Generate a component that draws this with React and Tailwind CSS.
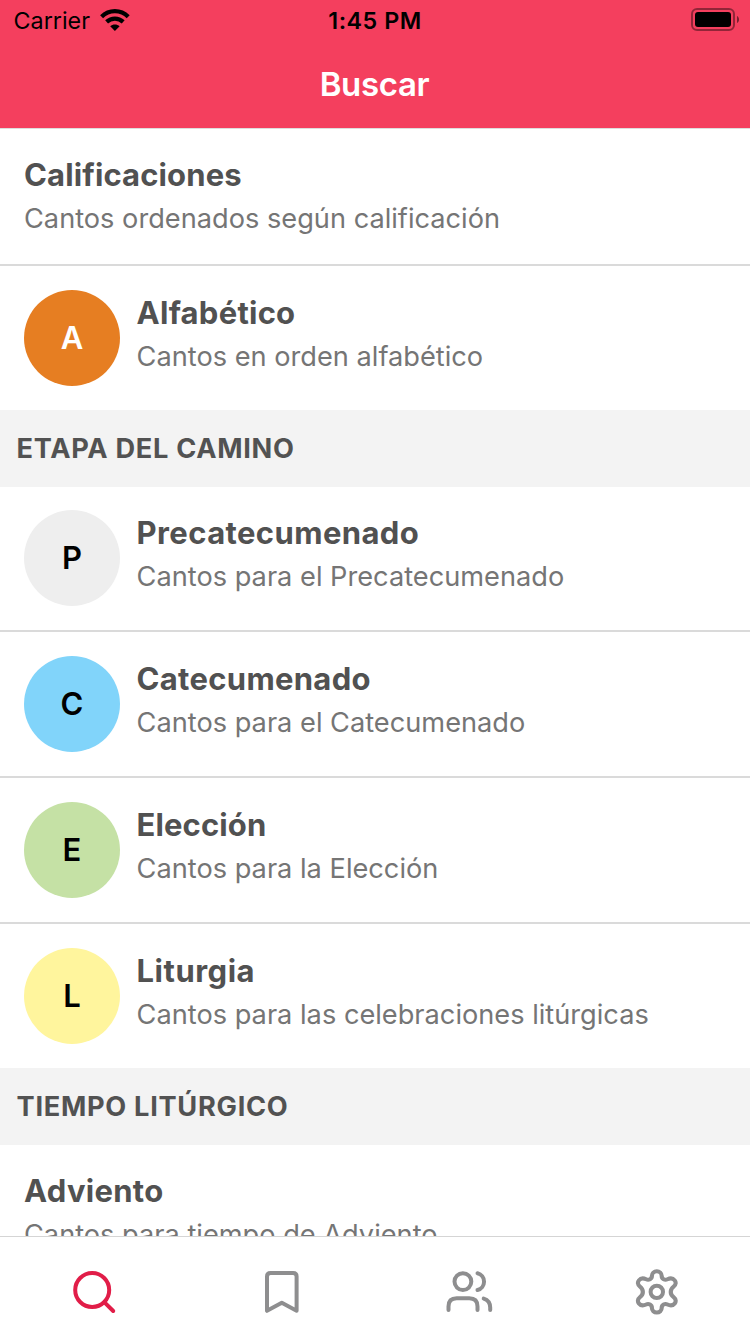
const rows = [
  { h: 'h-[138px]', title: 'Calificaciones', sub: 'Cantos ordenados según calificación', tracking: 'tracking-[0.12px]', border: true },
  { h: 'h-36', title: 'Alfabético', sub: 'Cantos en orden alfabético', tracking: 'tracking-[0.25px]', letter: 'A', color: 'bg-[#e67e22] text-white' },
  { section: 'ETAPA DEL CAMINO' },
  { h: 'h-[145px]', title: 'Precatecumenado', sub: 'Cantos para el Precatecumenado', tracking: 'tracking-[0.4px]', letter: 'P', color: 'bg-[#eeeeee] text-black', border: true, first: true },
  { h: 'h-[146px]', title: 'Catecumenado', sub: 'Cantos para el Catecumenado', tracking: 'tracking-[0.3px]', letter: 'C', color: 'bg-[#81d4fa] text-black', border: true },
  { h: 'h-[146px]', title: 'Elección', sub: 'Cantos para la Elección', tracking: 'tracking-[0.1px]', letter: 'E', color: 'bg-[#c5e1a5] text-black', border: true },
  { h: 'h-36', title: 'Liturgia', sub: 'Cantos para las celebraciones litúrgicas', tracking: 'tracking-[0.5px]', letter: 'L', color: 'bg-[#fff59d] text-black' },
  { section: 'TIEMPO LITÚRGICO' },
  { h: 'h-[146px]', title: 'Adviento', sub: 'Cantos para tiempo de Adviento', tracking: 'tracking-[0.3px]', first: true },
];

function Row({ row }) {
  if (row.section) {
    return <h2 className="flex h-[77px] shrink-0 items-center bg-[#f3f3f3] pt-0.5 pl-[16.6px] text-[27.2px] font-bold tracking-[0.7px] text-[#525252]">{row.section}</h2>;
  }
  return (
    <div className={`flex shrink-0 items-start gap-[16.6px] pl-6 ${row.h} ${row.first ? 'pt-[23px]' : 'pt-6'} ${row.border ? 'border-b-2 border-[#dadada]' : ''}`}>
      {row.letter && (
        <div className={`flex size-24 shrink-0 items-center justify-center rounded-full pt-px text-[31px] font-semibold ${row.color}`}>{row.letter}</div>
      )}
      <div className="whitespace-nowrap">
        <div className={`text-[31px] leading-[46px] font-bold text-[#515151] ${row.tracking}`}>{row.title}</div>
        <div className="text-[27.2px] leading-[41px] text-[#757575]">{row.sub}</div>
      </div>
    </div>
  );
}

function Wifi() {
  return (
    <svg className="h-[22px] w-[30px]" viewBox="0 0 30 22" fill="none" stroke="black" strokeWidth="4.2">
      <path d="M1.600 7.700C9 .3 20.800 .3 28.200 7.700" />
      <path d="M6.600 12.900c4.800-4.500 11.800-4.500 16.600 0" />
      <path d="M10.200 17.300c2.600-2.300 6.800-2.300 9.400 0L14.900 22z" fill="black" stroke="none" />
    </svg>
  );
}

function Battery() {
  return (
    <svg className="h-6 w-12" viewBox="0 0 48 24" fill="none">
      <rect x="1" y="1" width="42" height="21" rx="5" stroke="black" strokeOpacity=".4" strokeWidth="2" />
      <rect x="4" y="4" width="36" height="15" rx="3" fill="black" />
      <path d="M46 8c2.700 1.500 2.700 5.500 0 7z" fill="black" fillOpacity=".5" />
    </svg>
  );
}

function TabIcon({ active, children }) {
  return (
    <button className={`flex h-[97px] flex-1 justify-center pt-[27px] ${active ? 'text-[#e11d48]' : 'text-[#8e8e8f]'}`}>
      <svg className="size-14" viewBox="0 0 56 56" fill="none" stroke="currentColor" strokeWidth="4" strokeLinecap="round" strokeLinejoin="round">
        {children}
      </svg>
    </button>
  );
}

export default function App() {
  return (
    <div className="flex h-[1334px] w-[750px] flex-col overflow-hidden bg-white font-['Inter',sans-serif]">
      <header className="h-[129px] shrink-0 border-b border-[#dddddd] bg-[#f43f5e]">
        <div className="grid h-10 grid-cols-3 items-center text-[23.3px] text-black">
          <div className="flex items-center gap-2.5 pl-[13.6px]"><span className="pt-0.5">Carrier</span><Wifi /></div>
          <div className="pt-0.5 text-center font-semibold tracking-[0.5px]">1:45 PM</div>
          <div className="flex justify-end pr-[11px]"><Battery /></div>
        </div>
        <h1 className="flex h-[88px] items-center justify-center pt-0.5 pr-px text-[33px] font-semibold tracking-[-0.35px] text-white">Buscar</h1>
      </header>
      <main className="-mt-px flex min-h-0 flex-1 flex-col overflow-hidden">
        {rows.map((row, i) => <Row key={i} row={row} />)}
      </main>
      <nav className="flex h-[98px] shrink-0 border-t border-[#d5d5d5] bg-white">
        <TabIcon active>
          <circle cx="26.200" cy="26" r="17" />
          <path d="m38.500 38.300 8.700 8.700" />
        </TabIcon>
        <TabIcon>
          <path d="M14 46.800V12.500q0-3.500 3.500-3.500h22.600q3.500 0 3.500 3.500v34.300l-14.800-8z" />
        </TabIcon>
        <TabIcon>
          <circle cx="21.900" cy="17.600" r="8.400" />
          <path d="M36.500 9.300a8.600 8.600 0 0 1 0 16.700M7.500 46v-3.500q0-8.200 8.200-8.200h12.600q8.200 0 8.200 8.200V46M42.700 34.600q6.500 2 6.500 9V46" />
        </TabIcon>
        <TabIcon>
          <circle cx="28.800" cy="27.900" r="6.200" />
          <path transform="matrix(1.045 0 0 1.01 -.67 -.18)" d="M23.500 12a4.700 4.700 0 0 1 9.400 0c0 3 3 4.500 5.500 3.300 6-3 10.500 3.500 6 7.200-3.800 3.200-3.800 7.400 0 10.600 4.500 3.700 0 10.200-6 7.200-2.500-1.200-5.500.3-5.500 3.300a4.700 4.700 0 0 1-9.400 0c0-3-3-4.500-5.500-3.300-6 3-10.500-3.500-6-7.200 3.800-3.200 3.800-7.400 0-10.600-4.500-3.700 0-10.200 6-7.200 2.500 1.200 5.500-.3 5.500-3.300" />
        </TabIcon>
      </nav>
    </div>
  );
}
